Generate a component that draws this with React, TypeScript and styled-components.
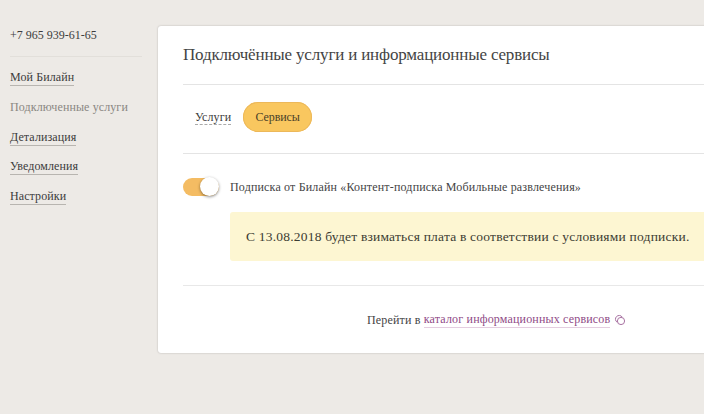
import * as React from 'react';
import styled, {createGlobalStyle} from 'styled-components';

const GlobalStyle = createGlobalStyle`
  html, body {
    margin: 0;
    padding: 0;
    height: 100%;
    background: #edeae6;
    overflow: hidden;
  }
  body {
    font-family: "Liberation Serif", serif;
    color: #3c3c3c;
  }
`;

const Page = styled.div`
  display: flex;
  width: 704px;
  height: 414px;
  padding: 26px 0 0 10px;
  box-sizing: border-box;
  overflow: hidden;
`;

const Sidebar = styled.nav`
  width: 132px;
  flex: none;
  margin-right: 16px;
`;

const Phone = styled.div`
  font-size: 12px;
  line-height: 16px;
  padding-bottom: 13px;
  padding-top: 1px;
  border-bottom: 1px solid #e2dfda;
  margin-bottom: 12px;
`;

const MenuItem = styled.div`
  height: 29.8px;
  font-size: 12px;
  line-height: 15px;
  letter-spacing: 0.1px;
  padding-top: 1px;
  box-sizing: border-box;
  white-space: nowrap;
`;

const MenuLink = styled.span<{$current?: boolean}>`
  display: inline-block;
  color: ${p => (p.$current ? '#8a8782' : '#3c3c3c')};
  border-bottom: ${p => (p.$current ? 'none' : '1px solid #b8b5b0')};
`;

const Card = styled.main`
  width: 580px;
  flex: none;
  height: 327px;
  background: #fff;
  border-radius: 3px;
  box-shadow: 0 0 2px rgba(0, 0, 0, 0.25);
  padding: 0 0 0 25px;
  box-sizing: border-box;
`;

const Title = styled.h1`
  margin: 0;
  height: 58px;
  border-bottom: 1px solid #e4e4e4;
  font-size: 17px;
  font-weight: normal;
  line-height: 58px;
  letter-spacing: -0.17px;
  color: #444;
`;

const Tabs = styled.div`
  display: flex;
  align-items: center;
  gap: 12px;
  height: 64px;
  padding: 0 0 4px 12px;
  border-bottom: 1px solid #e4e4e4;
`;

const Tab = styled.span`
  font-size: 12px;
  line-height: 14px;
  letter-spacing: 0.07px;
  border-bottom: 1px dashed #aaa;
`;

const ActiveTab = styled.span`
  display: flex;
  align-items: center;
  justify-content: center;
  width: 69px;
  height: 30px;
  border-radius: 15px;
  background: #f9c75f;
  box-shadow: inset 0 0 0 1px #ecb85a;
  font-size: 12px;
  letter-spacing: -0.1px;
  color: #4a3f28;
`;

const ToggleRow = styled.div`
  display: flex;
  align-items: center;
  gap: 11px;
  margin-top: 23px;
  height: 20px;
  font-size: 12px;
  letter-spacing: 0.17px;
  color: #444;
`;

const Toggle = styled.span`
  position: relative;
  display: block;
  width: 36px;
  height: 18px;
  border-radius: 9px;
  background: #f4bc63;
`;

const Knob = styled.span`
  position: absolute;
  right: 0;
  top: -1px;
  width: 19px;
  height: 19px;
  border-radius: 50%;
  background: #fff;
  box-shadow: 0 1px 3px rgba(0, 0, 0, 0.45);
`;

const Notice = styled.div`
  margin: 15px 0 0 47px;
  height: 49px;
  padding-left: 16px;
  display: flex;
  align-items: center;
  background: #fdf6d2;
  border-radius: 3px 0 0 3px;
  font-size: 13.5px;
  letter-spacing: 0.21px;
  color: #3c3c32;
  white-space: nowrap;
`;

const Footer = styled.div`
  margin-top: 24px;
  border-top: 1px solid #e8e8e8;
  padding: 26px 0 0 184px;
  display: flex;
  align-items: center;
  font-size: 12px;
  letter-spacing: 0.17px;
  line-height: 15px;
  color: #444;
  white-space: pre;
`;

const CatalogLink = styled.span`
  color: #8f4a86;
  border-bottom: 1px solid #e4cde0;
`;

const ExternalIcon = styled.svg`
  width: 12px;
  height: 12px;
  margin-left: 4px;
  fill: none;
  stroke: #a872a2;
  stroke-width: 1;
`;

const menu = [
  {label: 'Мой Билайн'},
  {label: 'Подключенные услуги', current: true},
  {label: 'Детализация'},
  {label: 'Уведомления'},
  {label: 'Настройки'},
];

export default function App() {
  return (
    <Page>
      <GlobalStyle />
      <Sidebar>
        <Phone>+7 965 939-61-65</Phone>
        {menu.map(item => (
          <MenuItem key={item.label}>
            <MenuLink $current={item.current}>{item.label}</MenuLink>
          </MenuItem>
        ))}
      </Sidebar>
      <Card>
        <Title>Подключённые услуги и информационные сервисы</Title>
        <Tabs>
          <Tab>Услуги</Tab>
          <ActiveTab>Сервисы</ActiveTab>
        </Tabs>
        <ToggleRow>
          <Toggle>
            <Knob />
          </Toggle>
          <span>Подписка от Билайн «Контент-подписка Мобильные развлечения»</span>
        </ToggleRow>
        <Notice>С 13.08.2018 будет взиматься плата в соответствии с условиями подписки.</Notice>
        <Footer>
          Перейти в <CatalogLink>каталог информационных сервисов</CatalogLink>
          <ExternalIcon viewBox="0 0 12 12">
            <path d="M8.3 3.2A3.7 3.7 0 1 0 3.2 8.3" />
            <circle cx="7" cy="7" r="3.6" />
          </ExternalIcon>
        </Footer>
      </Card>
    </Page>
  );
}
